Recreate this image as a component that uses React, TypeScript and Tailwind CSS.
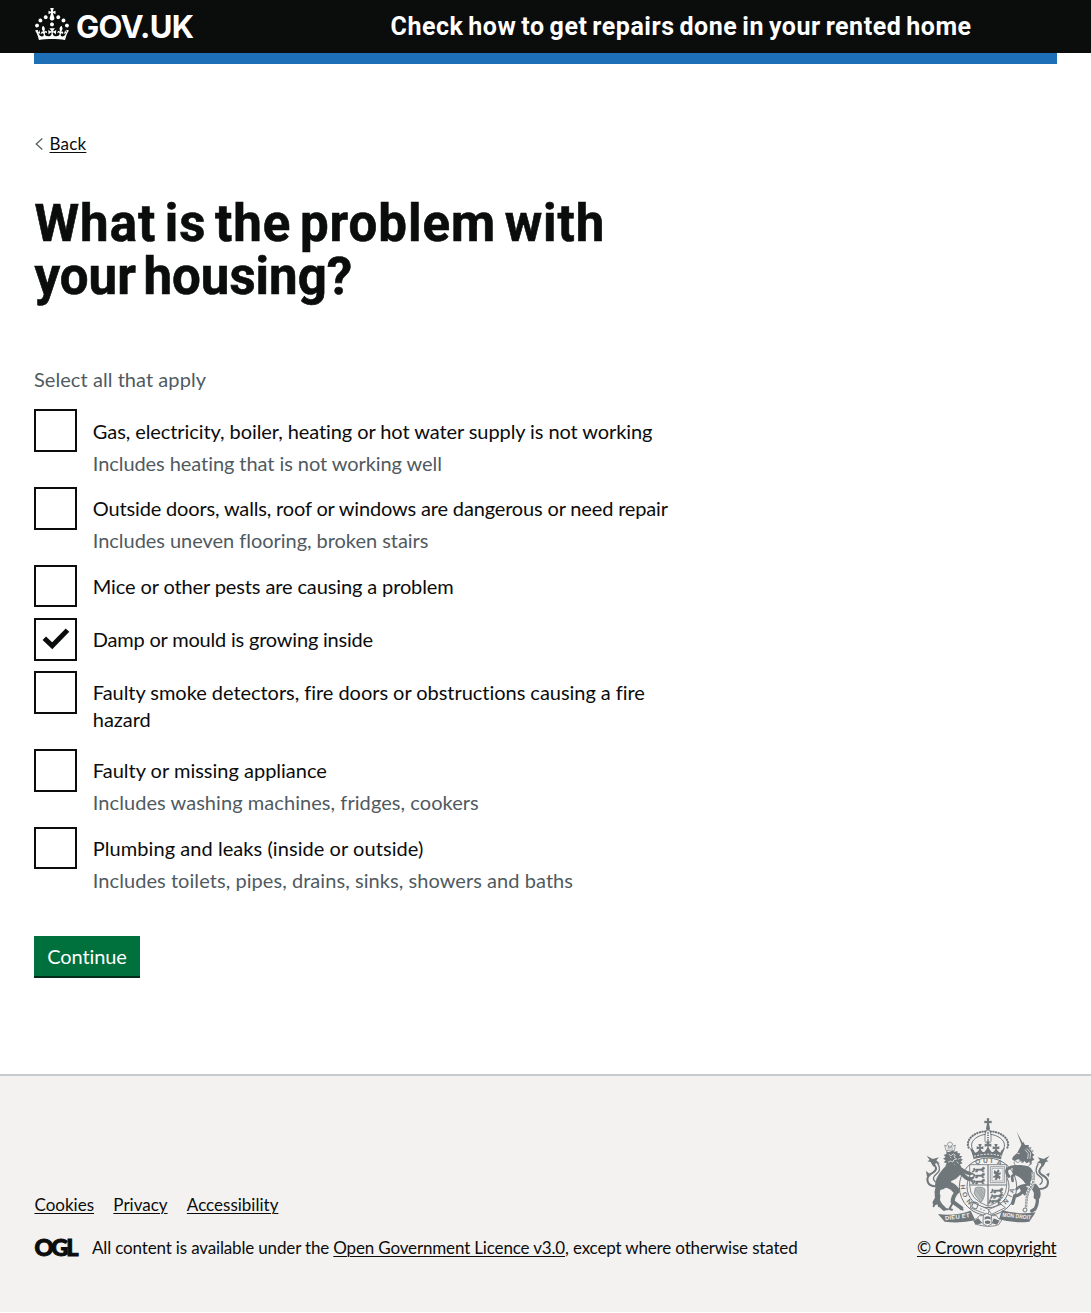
type Option = {
  label: { text: string; tracking: string }[];
  hint?: { text: string; tracking: string };
  checked?: boolean;
};

const options: Option[] = [
  {
    label: [{ text: 'Gas, electricity, boiler, heating or hot water supply is not working', tracking: 'tracking-[-0.08px]' }],
    hint: { text: 'Includes heating that is not working well', tracking: 'tracking-[-0.07px]' },
  },
  {
    label: [{ text: 'Outside doors, walls, roof or windows are dangerous or need repair', tracking: 'tracking-[-0.16px]' }],
    hint: { text: 'Includes uneven flooring, broken stairs', tracking: 'tracking-[-0.04px]' },
  },
  { label: [{ text: 'Mice or other pests are causing a problem', tracking: 'tracking-[-0.12px]' }] },
  { label: [{ text: 'Damp or mould is growing inside', tracking: 'tracking-[-0.2px]' }], checked: true },
  {
    label: [
      { text: 'Faulty smoke detectors, fire doors or obstructions causing a fire', tracking: 'tracking-[-0.04px]' },
      { text: 'hazard', tracking: 'tracking-[-0.03px]' },
    ],
  },
  {
    label: [{ text: 'Faulty or missing appliance', tracking: 'tracking-[0px]' }],
    hint: { text: 'Includes washing machines, fridges, cookers', tracking: 'tracking-[0.06px]' },
  },
  {
    label: [{ text: 'Plumbing and leaks (inside or outside)', tracking: 'tracking-[0.06px]' }],
    hint: { text: 'Includes toilets, pipes, drains, sinks, showers and baths', tracking: 'tracking-[0.06px]' },
  },
];

const ink = '#6f777b';
const paper = '#f3f2f1';

function Crown() {
  return (
    <svg viewBox="0 0 32 30" className="h-[32px] w-[34px] shrink-0" fill="currentColor" aria-hidden="true">
      <path d="M22.6 10.4c-1 .4-2-.1-2.4-1-.4-.9.1-2 1-2.4.9-.4 2 .1 2.4 1s-.1 2-1 2.4m-5.9 6.7c-.9.4-2-.1-2.4-1-.4-.9.1-2 1-2.4.9-.4 2 .1 2.4 1s-.1 2-1 2.4m10.8-3.7c-1 .4-2-.1-2.4-1-.4-.9.1-2 1-2.4.9-.4 2 .1 2.4 1s0 2-1 2.4m3.3 4.8c-1 .4-2-.1-2.4-1-.4-.9.1-2 1-2.4.9-.4 2 .1 2.4 1s-.1 2-1 2.4M17 4.7l2.3 1.2V2.5l-2.3.7-.2-.2.9-3h-3.4l.9 3-.2.2c-.1.1-2.3-.7-2.3-.7v3.4L15 4.7c.1.1.1.2.2.2l-1.3 4c-.1.2-.1.4-.1.6 0 1.1.8 2 1.9 2.2h.7c1-.2 1.9-1.1 1.9-2.1 0-.2 0-.4-.1-.6l-1.3-4c-.1-.2 0-.2.1-.3m-7.6 5.7c.9.4 2-.1 2.4-1 .4-.9-.1-2-1-2.4-.9-.4-2 .1-2.4 1s0 2 1 2.4m-5 3c.9.4 2-.1 2.4-1 .4-.9-.1-2-1-2.4-.9-.4-2 .1-2.4 1s.1 2 1 2.4m-3.2 4.8c.9.4 2-.1 2.4-1 .4-.9-.1-2-1-2.4-.9-.4-2 .1-2.4 1s0 2 1 2.4m14.8 11c4.4 0 8.6.3 12.3.8 1.1-4.5 2.4-7 3.7-8.8l-2.5-.9c.2 1.3.3 1.9 0 2.7-.4-.4-.8-1.1-1.1-2.3l-1.2 4c.7-.5 1.3-.8 2-.9-1.1 2.5-2.6 3.1-3.5 3-1.1-.2-1.7-1.2-1.5-2.1.3-1.2 1.5-1.5 2.1-.1 1.1-2.3-.8-3-2-2.3 1.9-1.9 2.1-3.5.6-5.6-2.1 1.6-2.1 3.2-1.2 5.5-1.2-1.4-3.2-.6-2.5 1.6.9-1.4 2.1-.5 1.9.8-.2 1.1-1.7 2.1-3.5 1.9-2.7-.2-2.9-2.1-2.9-3.6.7-.1 1.9.5 2.9 1.9l.4-4.3c-1.1 1.1-2.1 1.4-3.2 1.4.4-1.2 2.1-3 2.1-3h-5.4s1.7 1.9 2.1 3c-1.1 0-2.1-.2-3.2-1.4l.4 4.3c1-1.4 2.2-2 2.9-1.9-.1 1.5-.2 3.4-2.9 3.6-1.9.2-3.4-.8-3.5-1.9-.2-1.3 1-2.2 1.9-.8.7-2.3-1.2-3-2.5-1.6.9-2.2.9-3.9-1.2-5.5-1.5 2-1.3 3.7.6 5.6-1.2-.7-3.1 0-2 2.3.6-1.4 1.8-1.1 2.1.1.2.9-.3 1.9-1.5 2.1-.9.2-2.4-.5-3.5-3 .6 0 1.2.3 2 .9l-1.2-4c-.3 1.1-.7 1.9-1.1 2.3-.3-.8-.2-1.4 0-2.7l-2.9.9C1.3 23 2.6 25.5 3.7 30c3.7-.5 7.9-.8 12.3-.8" />
    </svg>
  );
}

function Lion() {
  return (
    <g>
      <path d="M108 137l-4-17 6 4 4-10 6-3 6 3 4 10 6-4-3 17q-13-4-25 0z" fill={paper} stroke={ink} strokeWidth="2" />
      <path d="M114 133l2-12 4 9 4-9 3 12" fill="none" stroke={ink} strokeWidth="2" />
      <path d="M108 139l9 2 10-4 8 3 7-2 1 7 8 0-3 7 9 2-6 6 8 4-7 5 6 6-8 3 4 8-9 0-2 9-9-5-6 7-5-8-8 3 0-9-9 0 4-8-9-3 6-6-8-5 8-5-6-6 9-4z" />
      <path d="M116 148l7 4 7-5 6 3-4 6 8 6-9 3-2 6-8-3-7 4M120 156l4 3M140 170l6 5M132 178l6 7M149 160l-5 3" fill="none" stroke={paper} strokeWidth="2.2" />
      <path d="M114 176q24 2 44 14q-6 30-34 38q-8 24-38 28q-14-6-10-24q4-24 38-56z" />
      <g fill="none" stroke={ink} strokeLinecap="round">
        <path d="M140 200q16 4 22 12q8 10 20 10" strokeWidth="12" />
        <path d="M146 188q18 14 34 18" strokeWidth="10" />
        <path d="M90 238q-10 18-8 28q4 14-6 26" strokeWidth="16" />
        <path d="M82 268q-2 26 20 43" strokeWidth="12" />
        <path d="M116 240q20 4 26 20q-14 14-14 30l26 19" strokeWidth="12" />
        <path d="M116 240q14 4 22 16" strokeWidth="21" />
        <path d="M100 313l12 0M152 312l6 2M74 292l-3 12M84 294l3 10M128 294l-10 18M118 312l8 2M182 222l7-3M182 224l5 6M178 206l10 0" strokeWidth="6" />
        <path d="M84 244q-32 2-32-22q2-12 18-20q12-8 6-18l-12-16" strokeWidth="6" />
        <path d="M76 230q-10-8-2-18l12-12q6-12-4-26" strokeWidth="4" />
      </g>
      <path d="M50 152l18 10 19-5-8 9 11 10-12-2-8 11-8-14-10-2 7-4zM48 198l11 8-8 10z" />
    </g>
  );
}

function Unicorn() {
  return (
    <g>
      <path d="M320 80l23 42-6 4z" />
      <path d="M334 120l6-10 5 10 12 0-2 5 10 3-4 5 10 5-5 5 7 7-6 5 6 9-8 4 0 10-12 4-8-4-8-8-12-6-12 4-7-5 3-8 13-12z" />
      <path d="M350 130l12 14-2 17M357 127l12 16M345 134l10 12-2 16M322 146l7-1M316 167l12-4" fill="none" stroke={paper} strokeWidth="2.2" />
      <path d="M312 173l5-6 6 7 7-7 7 7 7-7 6 7 8-5 3 7-6 9h-37z" fill={paper} stroke={ink} strokeWidth="2.2" />
      <path d="M312 182q32-6 50 6q14 16 4 36q-8 14-20 12q-14-22-34-26q-10-10 0-28z" />
      <g fill="none" stroke={ink} strokeLinecap="round">
        <path d="M326 186q-20-4-34 6q-6 10 4 22" strokeWidth="9" />
        <path d="M322 202q-8 4-16 12l2 14" strokeWidth="8" />
        <path d="M346 222q10 20 30 26" strokeWidth="11" />
        <path d="M373 246q12 14 8 28" strokeWidth="20" />
        <path d="M381 274q4 20-6 38l-10 6" strokeWidth="10" />
        <path d="M350 240q-22 2-30 12" strokeWidth="8" />
        <path d="M352 252l-14 4q-4 14-24 17l-6 22" strokeWidth="10" />
        <path d="M340 250l8 12" strokeWidth="20" />
        <path d="M384 252q30 2 30-22q-2-12-18-20q-12-8-6-18l10-16" strokeWidth="6" />
        <path d="M390 238q12-8 4-20l-12-10q-8-14 2-30" strokeWidth="4" />
      </g>
      <path d="M419 152l-18 10-18-5 7 9-11 10 12-2 8 12 8-15 9-2-7-4zM419 203l-11 5 8 8z" />
      <path d="M370 202q5 34-13 54q-8 15-9 54" fill="none" stroke={paper} strokeWidth="11" />
      <path d="M370 202q5 34-13 54q-8 15-9 54" fill="none" stroke={ink} strokeWidth="7" strokeDasharray="6 2.5" />
      <path d="M370 203q5 34-13 54q-8 15-9 54" fill="none" stroke={paper} strokeWidth="2.5" strokeDasharray="4 4.5" />
      <circle cx="345" cy="315" r="6" fill={paper} stroke={ink} strokeWidth="3" />
    </g>
  );
}

function PassantLion({ x, y }: { x: number; y: number }) {
  return (
    <path
      transform={`translate(${x} ${y})`}
      stroke={ink}
      strokeWidth="1.6"
      d="M0 4c3-4 6 0 5 3 5-4 14 0 20-3l4-5 5 2-1 5-5 2 5 5h-6l-4-4-9 0-2 5h-6l3-6-5 1-3 5h-5l5-7z"
    />
  );
}

function RoyalArms() {
  return (
    <svg viewBox="45 36 375 330" className="h-[110px] w-[125px]" fill={ink} aria-hidden="true">
      <circle cx="234" cy="245" r="86" fill={paper} stroke={ink} strokeWidth="3" />
      <circle cx="234" cy="245" r="63" fill="none" stroke={ink} strokeWidth="3" />
      <g fontFamily="Liberation Sans" fontWeight="700" fontSize="20" textAnchor="middle">
        <text x="203" y="177" transform="rotate(-8 203 170)">Q</text>
        <text x="226" y="175">U</text>
        <text x="244" y="175">I</text>
        <text x="268" y="179" transform="rotate(16 268 172)">A</text>
        <text x="160" y="254" transform="rotate(82 160 246)">H</text>
        <text x="165" y="276" transform="rotate(65 165 269)">O</text>
        <text x="178" y="297" transform="rotate(48 178 290)">N</text>
        <text x="270" y="307" transform="rotate(-28 270 300)">S</text>
        <text x="287" y="296" transform="rotate(-42 287 289)">N</text>
        <text x="299" y="279" transform="rotate(-60 299 272)">I</text>
        <text x="305" y="264" transform="rotate(-72 305 257)">A</text>
      </g>

      <path d="M179 179h111v63q0 42-55 62q-56-20-56-62z" fill={paper} stroke={ink} strokeWidth="2.5" />
      <path d="M234 179v124M179 240h111" fill="none" stroke={ink} strokeWidth="3.5" />
      <PassantLion x={190} y={187} />
      <PassantLion x={190} y={205} />
      <PassantLion x={190} y={223} />
      <PassantLion x={245} y={250} />
      <PassantLion x={244} y={266} />
      <PassantLion x={238} y={281} />
      <g fill="none" stroke={ink}>
        <path d="M241 185h43v48h-43z" strokeWidth="2" />
        <path d="M246 190h33v38h-33z" strokeWidth="1.5" />
      </g>
      <path d="M253 195l7 5 4-7 5 4-4 7 8-2-2 7-6 0 7 7-3 8-5-6-4 7-6-1 3-7-7 2 0-5 7-4-6-6z" />
      <path d="M196 249c11-5 24-2 29 4-1 17-2 27-13 40-3-9-16-18-19-28z" fill="#b9bcbd" stroke={ink} strokeWidth="2" />
      <path d="M198 253l20 30M205 251l14 25M212 251l9 17" stroke={ink} strokeWidth="1.2" />

      <path d="M230 40h8l-1 8 8-1v8l-8-1 2 13h-10l2-13-8 1v-8l8 1z" />
      <circle cx="234" cy="70" r="6" />
      <path d="M228 76h12l3 12v22l-9 8-9-8V88z" fill={paper} stroke={ink} strokeWidth="2.5" />
      <g fill="none" stroke={ink}>
        <path d="M234 82v30" strokeWidth="5" strokeDasharray="4 3" />
        <path d="M226 80c-26-2-62 22-50 48M242 80c26-2 62 22 50 48" strokeWidth="6.5" strokeLinecap="round" strokeDasharray="1 7" />
        <path d="M227 88c-20 2-46 16-42 37l3 10M241 88c20 2 46 16 42 37l-3 10" strokeWidth="3" />
      </g>
      <path
        transform="translate(3 0)"
        d="M188 163q-4-20-12-34l12 6 4 8q10-2 13-12l-8 2v-9l8 2-3-9h10l-3 9 8-2v9l-8-2q4 12 11 10l5-6q5-4 4-12l-8 2v-9l8 2-3-9h10l-3 9 8-2v9l-8-2q-1 8 4 12l5 6q7 2 11-10l-8 2v-9l8 2-3-9h10l-3 9 8-2v9l-8-2q3 10 11 12l4-8 10-6q-8 14-12 34q-42-12-86 0z"
      />
      <path d="M192 154q44-13 84 0" fill="none" stroke={paper} strokeWidth="3" strokeDasharray="6 4" />

      <Lion />
      <Unicorn />

      <path d="M84 327q50 7 98-10l14 29q-46 10-92 4z" />
      <path d="M377 322q-48 8-101-6l-9 27q44 13 91 7z" />
      <path d="M190 344q12 0 18-12l52 0q5 14 17 11l-11 16q-25 10-64 0z" fill={paper} stroke={ink} strokeWidth="2.5" />
      <path d="M184 291l54 23-4 15-53-20z" fill={paper} stroke={ink} strokeWidth="2.5" />
      <path d="M235 314l38-16 13 10-41 20z" fill={paper} stroke={ink} strokeWidth="2.5" />
      <rect x="187" y="292" width="16" height="18" rx="4" transform="rotate(20 195 301)" fill="none" stroke={ink} strokeWidth="3" />
      <circle cx="213" cy="312" r="2" />
      <circle cx="222" cy="316" r="2" />
      <path d="M220 331l10-6 14 6 2 25-13 8-14-7z" fill={paper} stroke={ink} strokeWidth="2.5" />
      <path d="M224 337q8-6 18 0v7q-9-5-18 0zM225 349q8-5 16 0v6q-8 4-16 0zM190 348l15-8 12 14-20 6zM251 340l18 7-8 12-15-4z" />
      <g fill={paper} fontFamily="Liberation Sans" fontWeight="700" fontSize="18">
        <text x="106" y="346" transform="rotate(-7 106 346)" textLength="74">
          DIEU ET
        </text>
        <text x="277" y="335" transform="rotate(6 277 335)" textLength="86" lengthAdjust="spacingAndGlyphs">
          MON DROIT
        </text>
      </g>
    </svg>
  );
}

function Checkbox({ checked }: { checked?: boolean }) {
  return (
    <span className="block h-[42.67px] w-[43px] shrink-0 border-2 border-[#0b0c0c] bg-white">
      {checked && (
        <svg viewBox="0 0 39 39" className="h-full w-full" fill="none" stroke="#0b0c0c" strokeWidth="5">
          <path d="M8.2 18.4l8 7.6L31.6 10.2" />
        </svg>
      )}
    </span>
  );
}

const link = 'underline decoration-1 underline-offset-2';

export default function App() {
  return (
    <div className="flex h-[1312px] flex-col bg-white font-['Lato',sans-serif] text-[#0b0c0c] [font-variant-ligatures:none]">
      <header>
        <div className="flex h-[53.3px] bg-[#0b0c0c] px-[34.5px] text-white">
          <div className="flex h-[33px] w-[356px] items-start gap-[7.5px] pt-[8px]">
            <Crown />
            <span className="font-['Inter',sans-serif] text-[31px] leading-[37px] font-bold tracking-[-0.65px]">GOV.UK</span>
          </div>
          <span className="pt-[11px] font-['Roboto',sans-serif] text-[25px] leading-[32px] font-bold tracking-[0.53px] whitespace-nowrap [word-spacing:-1.8px]">
            Check how to get repairs done in your rented home
          </span>
        </div>
        <div className="mx-[34px] h-[10.7px] bg-[#1d70b8]" />
      </header>

      <main className="flex flex-col px-[34px] pt-[69px]">
        <a className="flex h-[22px] items-center gap-[6.5px]">
          <svg viewBox="0 0 9 12" className="h-[12px] w-[9px]" fill="none" stroke="#505a5f" strokeWidth="1.2">
            <path d="M8.3.5L2.2 6l6.1 5.5" />
          </svg>
          <span className={`text-[17px] leading-[22px] tracking-[0.2px] ${link}`}>Back</span>
        </a>

        <h1 className="mt-[42px] pl-[0.5px] font-['Roboto',sans-serif] text-[51px] leading-[53.3px] font-bold [-webkit-text-stroke:0.6px_#0b0c0c] [word-spacing:-5px]">
          <span className="block tracking-[0.97px]">What is the problem with</span>
          <span className="block tracking-[0px]">your housing?</span>
        </h1>

        <p className="mt-[62.5px] text-[20px] leading-[26.67px] tracking-[0.06px] text-[#505a5f]">Select all that apply</p>

        <div className="mt-[16.5px] flex flex-col gap-[10.67px]">
          {options.map((option) => (
            <label key={option.label[0].text} className="flex gap-[15.8px]">
              <Checkbox checked={option.checked} />
              <span className={option.hint || option.label.length > 1 ? 'flex h-[67px] flex-col pt-[8.3px]' : 'flex h-[42.67px] flex-col pt-[8.3px]'}>
                {option.label.map((line) => (
                  <span key={line.text} className={`text-[20px] leading-[26.67px] whitespace-nowrap ${line.tracking}`}>
                    {line.text}
                  </span>
                ))}
                {option.hint && (
                  <span className={`mt-[5.33px] text-[20px] leading-[26.67px] whitespace-nowrap text-[#505a5f] ${option.hint.tracking}`}>
                    {option.hint.text}
                  </span>
                )}
              </span>
            </label>
          ))}
        </div>

        <button className="mt-[42px] h-[42.5px] w-[106px] self-start border-b-2 border-[#002d18] bg-[#00703c] text-[20px] leading-[40px] tracking-[-0.09px] text-white">
          Continue
        </button>
      </main>

      <footer className="mt-auto flex h-[238px] justify-between border-t-2 border-[#c6cbcf] bg-[#f3f2f1] px-[34.5px] text-[17px]">
        <div className="flex flex-col pt-[118px]">
          <nav className="flex gap-[19.3px] leading-[22px]">
            {['Cookies', 'Privacy', 'Accessibility'].map((name) => (
              <a key={name} className={link}>
                {name}
              </a>
            ))}
          </nav>
          <div className="mt-[21px] flex leading-[22px]">
            <span className="w-[57.5px] shrink-0 text-[23.5px] leading-[20px] font-black tracking-[-2.2px] [-webkit-text-stroke:1px_#0b0c0c]">
              OGL
            </span>
            <span className="tracking-[-0.155px] whitespace-nowrap">
              All content is available under the <a className={link}>Open Government Licence v3.0</a>, except where otherwise stated
            </span>
          </div>
        </div>
        <div className="flex flex-col items-end pt-[41px]">
          <div className="mr-[6.5px]">
            <RoyalArms />
          </div>
          <a className={`mt-[10px] leading-[22px] tracking-[-0.18px] ${link}`}>© Crown copyright</a>
        </div>
      </footer>
    </div>
  );
}
